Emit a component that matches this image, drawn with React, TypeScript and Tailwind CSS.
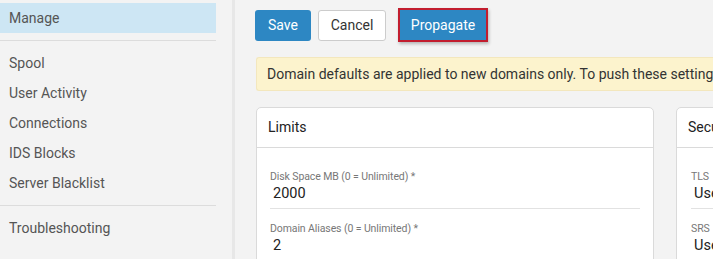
import React from "react";

const navItems = ["Spool", "User Activity", "Connections", "IDS Blocks", "Server Blacklist"];

const limitFields = [
  { label: "Disk Space MB (0 = Unlimited) *", value: "2000" },
  { label: "Domain Aliases (0 = Unlimited) *", value: "2" },
];

const securityFields = [
  { label: "TLS", value: "Use" },
  { label: "SRS", value: "Use" },
];

const Field = ({ label, value, first }: { label: string; value: string; first?: boolean }) => (
  <div className={first ? "" : "mt-[13px]"}>
    <div className="text-[10.5px] leading-[14px] tracking-[-0.1px] text-[#777] whitespace-nowrap">{label}</div>
    <div className="px-[3px] text-[14.5px] leading-[20px] text-[#222] whitespace-nowrap">{value}</div>
    <div className="mt-[4px] h-px bg-[#e2e2e2]" />
  </div>
);

const App = () => {
  return (
    <div
      className="flex h-[259px] w-[713px] overflow-hidden bg-[#f3f3f3]"
      style={{ fontFamily: "Roboto, 'Liberation Sans', sans-serif" }}
    >
      {/* Sidebar */}
      <div className="w-[232px] shrink-0 pt-[3px]">
        <div className="w-[216px]">
          <div className="flex h-[30px] items-center bg-[#cde6f4] pl-[9px] text-[14px] text-[#555]">
            Manage
          </div>
          <div className="mt-[7px] h-px bg-[#dcdcdc]" />
          <div className="pt-[7px]">
            {navItems.map((item) => (
              <div key={item} className="flex h-[30px] items-center pl-[9px] text-[14px] text-[#555]">
                {item}
              </div>
            ))}
          </div>
          <div className="mt-[7px] h-px bg-[#dcdcdc]" />
          <div className="pt-[7px]">
            <div className="flex h-[30px] items-center pl-[9px] text-[14px] text-[#555]">
              Troubleshooting
            </div>
          </div>
        </div>
      </div>
      <div className="w-[3px] shrink-0 bg-[#e7e7e7]" />

      {/* Main */}
      <div className="min-w-0 flex-1 pl-[20px] pt-[8px]">
        <div className="flex h-[34px] items-center">
          <button className="h-[31px] w-[56px] rounded-[3px] bg-[#2d87c3] text-[14px] text-white">
            Save
          </button>
          <button className="ml-[7px] h-[31px] w-[68px] rounded-[3px] border border-[#cccccc] bg-white text-[14px] text-[#333]">
            Cancel
          </button>
          <button className="ml-[12px] h-[34px] w-[90px] border-2 border-[#c21d2e] bg-[#2d87c3] text-[14px] text-white shadow-[1px_2px_3px_rgba(0,0,0,0.25)]">
            Propagate
          </button>
        </div>

        <div className="ml-px mt-[15px] flex h-[34px] items-center whitespace-nowrap rounded-l-[3px] border border-r-0 border-[#f3e7bd] bg-[#fcf3cd] pl-[10px] text-[14px] text-[#333]">
          Domain defaults are applied to new domains only. To push these settings to existing domains, use Propagate.
        </div>

        <div className="ml-px mt-[16px] flex gap-[22px]">
          <div className="h-[200px] w-[398px] shrink-0 rounded-[5px] border border-[#dadada] bg-white">
            <div className="flex h-[40px] items-center border-b border-[#dadada] pl-[11px] text-[14px] text-[#222]">
              Limits
            </div>
            <div className="px-[13px] pt-[22px]">
              {limitFields.map((f, i) => (
                <Field key={f.label} label={f.label} value={f.value} first={i === 0} />
              ))}
            </div>
          </div>
          <div className="h-[200px] w-[200px] shrink-0 rounded-[5px] border border-[#dadada] bg-white">
            <div className="flex h-[40px] items-center border-b border-[#dadada] pl-[11px] text-[14px] text-[#222]">
              Security
            </div>
            <div className="px-[14px] pt-[22px]">
              {securityFields.map((f, i) => (
                <Field key={f.label} label={f.label} value={f.value} first={i === 0} />
              ))}
            </div>
          </div>
        </div>
      </div>
    </div>
  );
};

export default App;
